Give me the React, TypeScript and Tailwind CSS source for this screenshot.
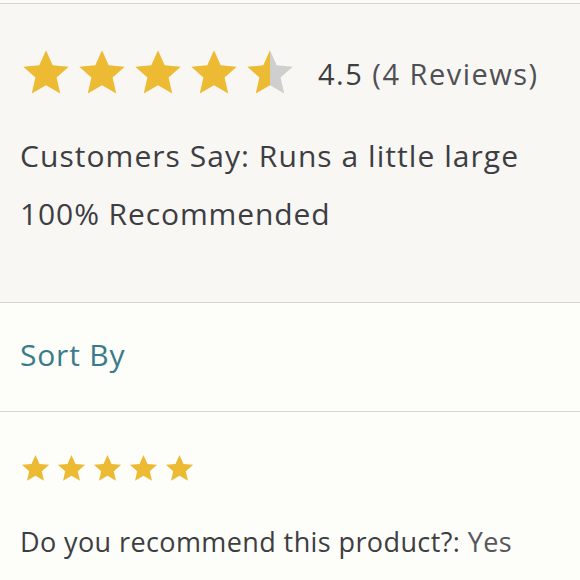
import React from 'react'

const STAR = 'M12 1.5l3.09 6.97 7.41.7-5.6 4.93 1.66 7.4L12 17.6l-6.56 3.9 1.66-7.4L1.5 9.17l7.41-.7L12 1.5z'

function Star({ size, fill = 1 }: { size: number; fill?: number }) {
  const id = `half-${size}`
  return (
    <svg width={size} height={size} viewBox="0 0 24 24">
      {fill < 1 && (
        <defs>
          <linearGradient id={id}>
            <stop offset="50%" stopColor="#ecbb33" />
            <stop offset="50%" stopColor="#cfcfcf" />
          </linearGradient>
        </defs>
      )}
      <path d={STAR} fill={fill < 1 ? `url(#${id})` : '#ecbb33'} />
    </svg>
  )
}

export default function App() {
  return (
    <div className="min-h-[580px] bg-[#fdfdf9] text-[#3d3d42]" style={{ fontFamily: '"Open Sans", Lato, sans-serif' }}>
      <div className="h-[3px] bg-[#fbfbf8]" />
      {/* Summary */}
      <div className="border-t border-b border-[#d6d5d2] bg-[#f8f7f4] px-5 pt-[43px] pb-[73px]">
        <div className="flex items-center">
          <div className="flex gap-[4px]">
            <Star size={52} />
            <Star size={52} />
            <Star size={52} />
            <Star size={52} />
            <Star size={52} fill={0.5} />
          </div>
          <span className="ml-[22px] text-[29px] leading-none tracking-[1.5px]">
            4.5 <span className="text-[#4f4f54]">(4 Reviews)</span>
          </span>
        </div>
        <p className="mt-[42px] text-[30px] leading-none tracking-[1.05px]">Customers Say: Runs a little large</p>
        <p className="mt-[28px] text-[30px] leading-none tracking-[0.9px]">100% Recommended</p>
      </div>

      {/* Sort */}
      <div className="border-b border-[#d6d5d2] px-5 pt-[37px] pb-[41px]">
        <p className="text-[30px] leading-none tracking-[0.8px] text-[#3a7b8b]">Sort By</p>
      </div>

      {/* Review */}
      <div className="px-5 pt-[41px]">
        <div className="flex gap-[5px]">
          <Star size={31} />
          <Star size={31} />
          <Star size={31} />
          <Star size={31} />
          <Star size={31} />
        </div>
        <p className="mt-[44px] text-[27px] leading-none tracking-[0.4px]">
          Do you recommend this product?: <span className="text-[#57575c]">Yes</span>
        </p>
      </div>
    </div>
  )
}
